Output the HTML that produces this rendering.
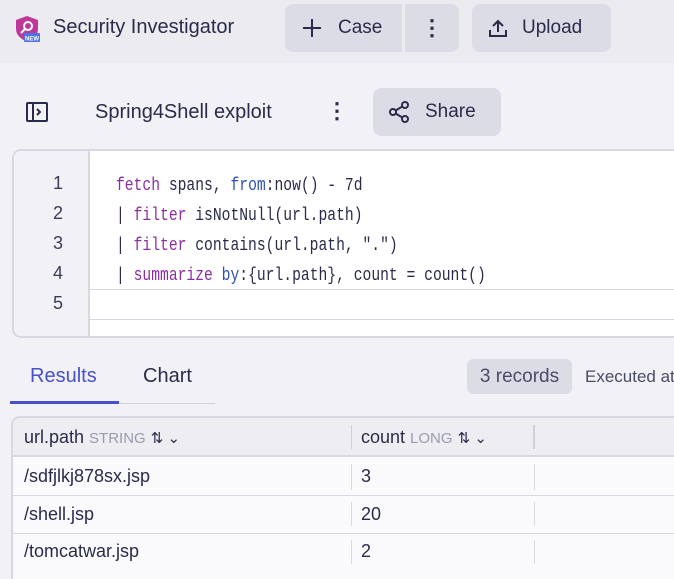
<!DOCTYPE html>
<html><head><style>
*{margin:0;padding:0;box-sizing:border-box}
html,body{width:674px;height:579px;overflow:hidden}
body{background:#f2f2f6;font-family:"Liberation Sans",sans-serif;color:#2a2b4a;position:relative}
.a{position:absolute}
.top{left:0;top:0;width:674px;height:63px;background:#ebebf0}
.btn{background:#dcdce6;border-radius:8px;height:48px;top:4px;display:flex;align-items:center;font-size:19px}
.code{font-family:"Liberation Mono",monospace;font-size:18px;white-space:pre;transform:scaleX(0.815);transform-origin:0 0}
.kw{color:#8a2f9f}.bl{color:#2e4fb4}
.ln{font-size:18px;color:#3a3b5a;width:40px;text-align:right}
.cell{font-size:18px}
</style></head><body>
<div class="a top"></div>
<svg class="a" style="left:14px;top:14px" width="28" height="30" viewBox="0 0 28 30">
<path d="M13 2 L24 6 V15 C24 21 19 25 13 28 C7 25 2 21 2 15 V6Z" fill="#c0379a"/>
<circle cx="14" cy="12" r="4" fill="none" stroke="#fff" stroke-width="2"/><path d="M11 15 L7 19" stroke="#fff" stroke-width="2"/>
<rect x="10" y="19" width="16" height="9" rx="1" fill="#4d73e6"/><text x="18" y="26.5" font-size="6" fill="#fff" text-anchor="middle" font-family="Liberation Sans" font-weight="bold">NEW</text>
</svg>
<div class="a" style="left:53px;top:16px;font-size:20px">Security Investigator</div>
<div class="a btn" style="left:285px;width:117px;border-radius:8px 0 0 8px">
<svg style="margin:0 16px 0 17px" width="20" height="20" viewBox="0 0 20 20" stroke="#2a2b4a" stroke-width="2"><path d="M10 1v18M1 10h18"/></svg>Case</div>
<div class="a btn" style="left:405px;width:54px;border-radius:0 8px 8px 0;justify-content:center;font-size:22px;font-weight:bold">⋮</div>
<div class="a btn" style="left:472px;width:139px">
<svg style="margin:0 14px 0 16px" width="20" height="20" viewBox="0 0 20 20" fill="none" stroke="#2a2b4a" stroke-width="2"><path d="M10 14V3M5 8l5-5 5 5M2 12v6h16v-6"/></svg>Upload</div>
<svg class="a" style="left:26px;top:101px" width="22" height="22" viewBox="0 0 22 22" fill="none" stroke="#2a2b4a" stroke-width="2"><rect x="1" y="2" width="20" height="18" rx="1"/><path d="M7 2v18M11 8l3 3-3 3"/></svg>
<div class="a" style="left:95px;top:101px;font-size:20px">Spring4Shell exploit</div>
<div class="a" style="left:326px;top:98px;font-size:22px;font-weight:bold">⋮</div>
<div class="a btn" style="left:373px;top:88px;width:128px">
<svg style="margin:0 14px 0 14px" width="24" height="24" viewBox="0 0 24 24" fill="none" stroke="#2a2b4a" stroke-width="2"><circle cx="18" cy="5" r="3"/><circle cx="6" cy="12" r="3"/><circle cx="18" cy="19" r="3"/><path d="M8.6 10.5l6.8-4M8.6 13.5l6.8 4"/></svg>Share</div>
<div class="a" style="left:12px;top:149px;width:680px;height:189px;background:#fff;border:2px solid #d8d8e2;border-radius:9px;overflow:hidden">
<div class="a" style="left:0;top:0;width:76px;height:189px;background:#f2f2f6;border-right:2px solid #d8d8e2"></div>
<div class="a" style="left:76px;top:138px;width:620px;border-top:1px solid #d8d8e2"></div>
<div class="a" style="left:76px;top:168px;width:620px;border-top:1px solid #d8d8e2"></div>
</div>
<div class="a ln" style="left:23px;top:173px">1</div>
<div class="a ln" style="left:23px;top:203px">2</div>
<div class="a ln" style="left:23px;top:233px">3</div>
<div class="a ln" style="left:23px;top:263px">4</div>
<div class="a ln" style="left:23px;top:293px">5</div>
<div class="a code" style="left:116px;top:171px;line-height:30px"><span class="kw">fetch</span> spans, <span class="bl">from</span>:now() - 7d
| <span class="kw">filter</span> isNotNull(url.path)
| <span class="kw">filter</span> contains(url.path, ".")
| <span class="kw">summarize</span> <span class="bl">by</span>:{url.path}, count = count()</div>
<div class="a" style="left:30px;top:365px;font-size:20px;color:#4650c8">Results</div>
<div class="a" style="left:143px;top:365px;font-size:20px">Chart</div>
<div class="a" style="left:10px;top:403px;width:205px;height:1px;background:#d0d0dc"></div>
<div class="a" style="left:10px;top:401px;width:109px;height:3px;background:#4650c8"></div>
<div class="a" style="left:467px;top:359px;width:105px;height:35px;background:#dcdce6;border-radius:6px;font-size:19px;color:#4a4b66;text-align:center;line-height:35px">3 records</div>
<div class="a" style="left:585px;top:367px;font-size:17px;color:#4a4b66;white-space:nowrap">Executed at</div>
<div class="a" style="left:11px;top:416px;width:680px;height:170px;background:#fafafc;border:2px solid #d8d8e2;border-radius:9px;overflow:hidden">
<div class="a" style="left:0;top:0;width:680px;height:39px;background:#ededf2;border-bottom:2px solid #d8d8e2"></div>
<div class="a" style="left:0;top:77px;width:680px;border-top:1px solid #d8d8e2"></div>
<div class="a" style="left:0;top:115px;width:680px;border-top:1px solid #d8d8e2"></div>
</div>
<div class="a" style="left:351px;top:425px;width:1px;height:24px;background:#d0d0dc"></div>
<div class="a" style="left:533px;top:425px;width:2px;height:24px;background:#d0d0dc"></div>
<div class="a" style="left:351px;top:464px;width:1px;height:26px;background:#d8d8e2"></div>
<div class="a" style="left:351px;top:502px;width:1px;height:24px;background:#d8d8e2"></div>
<div class="a" style="left:351px;top:540px;width:1px;height:24px;background:#d8d8e2"></div>
<div class="a" style="left:534px;top:464px;width:1px;height:26px;background:#d8d8e2"></div>
<div class="a" style="left:534px;top:502px;width:1px;height:24px;background:#d8d8e2"></div>
<div class="a" style="left:534px;top:540px;width:1px;height:24px;background:#d8d8e2"></div>
<div class="a" style="left:24px;top:427px;font-size:18px">url.path <span style="font-size:15px;color:#9a9bb0">STRING</span> <span style="font-size:15px">⇅ ⌄</span></div>
<div class="a" style="left:361px;top:427px;font-size:18px">count <span style="font-size:15px;color:#9a9bb0">LONG</span> <span style="font-size:15px">⇅ ⌄</span></div>
<div class="a cell" style="left:24px;top:466px">/sdfjlkj878sx.jsp</div>
<div class="a cell" style="left:361px;top:466px">3</div>
<div class="a cell" style="left:24px;top:504px">/shell.jsp</div>
<div class="a cell" style="left:361px;top:504px">20</div>
<div class="a cell" style="left:24px;top:541px">/tomcatwar.jsp</div>
<div class="a cell" style="left:361px;top:541px">2</div>
</body></html>
